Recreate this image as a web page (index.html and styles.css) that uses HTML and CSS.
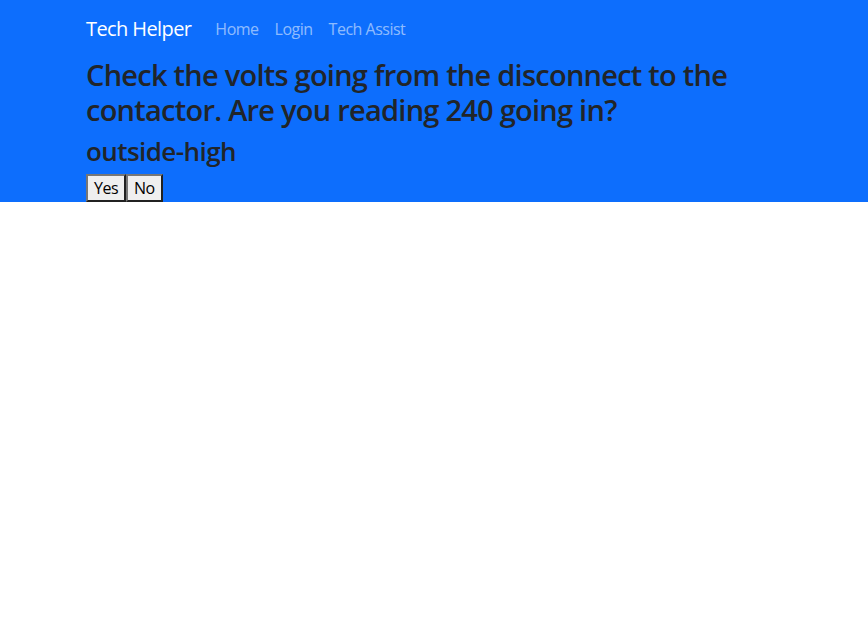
FILE: index.html
```html
<!DOCTYPE html>
<html lang="en">
<head>
<meta charset="utf-8">
<title>Tech Helper</title>
<link rel="stylesheet" href="styles.css">
</head>
<body>
<div class="hero">
  <nav class="navbar">
    <div class="container nav-inner">
      <a class="brand" href="#">Tech Helper</a>
      <ul class="nav-links">
        <li><a href="#">Home</a></li>
        <li><a href="#">Login</a></li>
        <li><a href="#">Tech Assist</a></li>
      </ul>
    </div>
  </nav>
  <div class="container">
    <h2 class="question">Check the volts going from the disconnect to the contactor. Are you reading 240 going in?</h2>
    <h3 class="tag">outside-high</h3>
    <div class="buttons"><button class="btn">Yes</button><button class="btn">No</button></div>
  </div>
</div>
</body>
</html>
```
FILE: styles.css
```css
* { box-sizing: border-box; }
body {
  margin: 0;
  font-family: "Open Sans", "Noto Sans", sans-serif;
  font-size: 16px;
  line-height: 1.5;
  color: #212529;
  background: #fff;
}
.hero { background: #0d6efd; }
.container {
  width: 720px;
  margin: 0 auto;
  padding: 0 12px;
}
.navbar { padding: 9px 0 9px; }
.nav-inner { display: flex; align-items: center; }
.brand {
  color: #fff;
  text-decoration: none;
  font-size: 20px;
  padding: 5px 0;
  margin-right: 16px;
  line-height: 30px;
  letter-spacing: -0.6px;
}
.nav-links {
  list-style: none;
  margin: 0;
  padding: 0;
  display: flex;
}
.nav-links a {
  display: block;
  padding: 8px;
  color: rgba(255,255,255,.55);
  text-decoration: none;
  letter-spacing: -0.5px;
}
.question {
  margin: 0 0 8px;
  font-size: 29px;
  font-weight: 600;
  line-height: 1.2;
  letter-spacing: -0.75px;
}
.tag {
  margin: 0 0 7px;
  font-size: 26px;
  font-weight: 600;
  line-height: 1.2;
  letter-spacing: -0.57px;
}
.buttons { display: flex; }
.btn {
  font-family: inherit;
  font-size: 16px;
  line-height: 24px;
  letter-spacing: -0.5px;
  color: #000;
  background: #efefef;
  border: 2px outset #767676;
  border-radius: 0;
  padding: 0 6px;
  margin: 0;
}
```
